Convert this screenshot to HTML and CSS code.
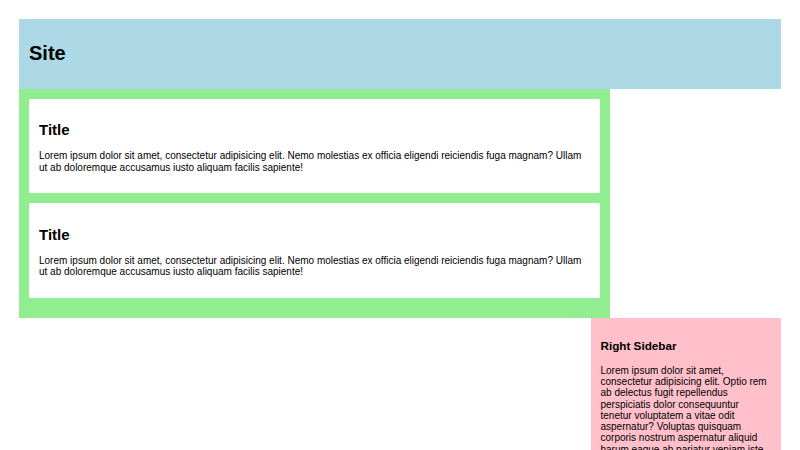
FILE: index.html
```html
<!DOCTYPE html>
<html lang="en">
<head>
<meta charset="utf-8">
<title>Site</title>
<link rel="stylesheet" href="styles.css">
</head>
<body>
<div class="container">
  <header class="site-header">
    <h1>Site</h1>
  </header>
  <div class="layout">
    <main class="main">
      <article class="card">
        <h2>Title</h2>
        <p>Lorem ipsum dolor sit amet, consectetur adipisicing elit. Nemo molestias ex officia eligendi reiciendis fuga magnam? Ullam ut ab doloremque accusamus iusto aliquam facilis sapiente!</p>
      </article>
      <article class="card">
        <h2>Title</h2>
        <p>Lorem ipsum dolor sit amet, consectetur adipisicing elit. Nemo molestias ex officia eligendi reiciendis fuga magnam? Ullam ut ab doloremque accusamus iusto aliquam facilis sapiente!</p>
      </article>
    </main>
    <aside class="sidebar">
      <h3>Right Sidebar</h3>
      <p>Lorem ipsum dolor sit amet, consectetur adipisicing elit. Optio rem ab delectus fugit repellendus perspiciatis dolor consequuntur tenetur voluptatem a vitae odit aspernatur? Voluptas quisquam corporis nostrum aspernatur aliquid harum eaque ab pariatur veniam iste, quos natus doloremque sequi.</p>
    </aside>
  </div>
</div>
</body>
</html>
```
FILE: styles.css
```css
html, body {
  margin: 0;
  padding: 0;
  background: #fff;
}
body {
  font-family: "Liberation Sans", Arial, sans-serif;
  font-size: 10px;
  line-height: 11.5px;
  color: #000;
}
.container {
  width: 762px;
  margin: 19px auto;
}
.site-header {
  background: #add8e6;
  padding: 10px;
}
.site-header h1 {
  font-size: 20px;
  line-height: 23px;
  margin: 13.4px 0;
}
.layout {
  display: flex;
  flex-wrap: wrap;
  align-items: flex-start;
}
.main {
  width: 77.5%;
  box-sizing: border-box;
  background: #90ee90;
  padding: 10px;
}
.card {
  background: #fff;
  padding: 10px;
  margin-bottom: 10px;
}
.card h2 {
  font-size: 15px;
  line-height: 17px;
  margin: 12.25px 0;
}
.card p {
  margin: 10px 0;
}
.sidebar {
  width: 25%;
  box-sizing: border-box;
  margin-left: auto;
  background: #ffc0cb;
  padding: 10px;
}
.sidebar h3 {
  font-size: 11.7px;
  line-height: 13.5px;
  margin: 11.7px 0;
}
.sidebar p {
  margin: 10px 0;
  line-height: 11.3px;
}
```
